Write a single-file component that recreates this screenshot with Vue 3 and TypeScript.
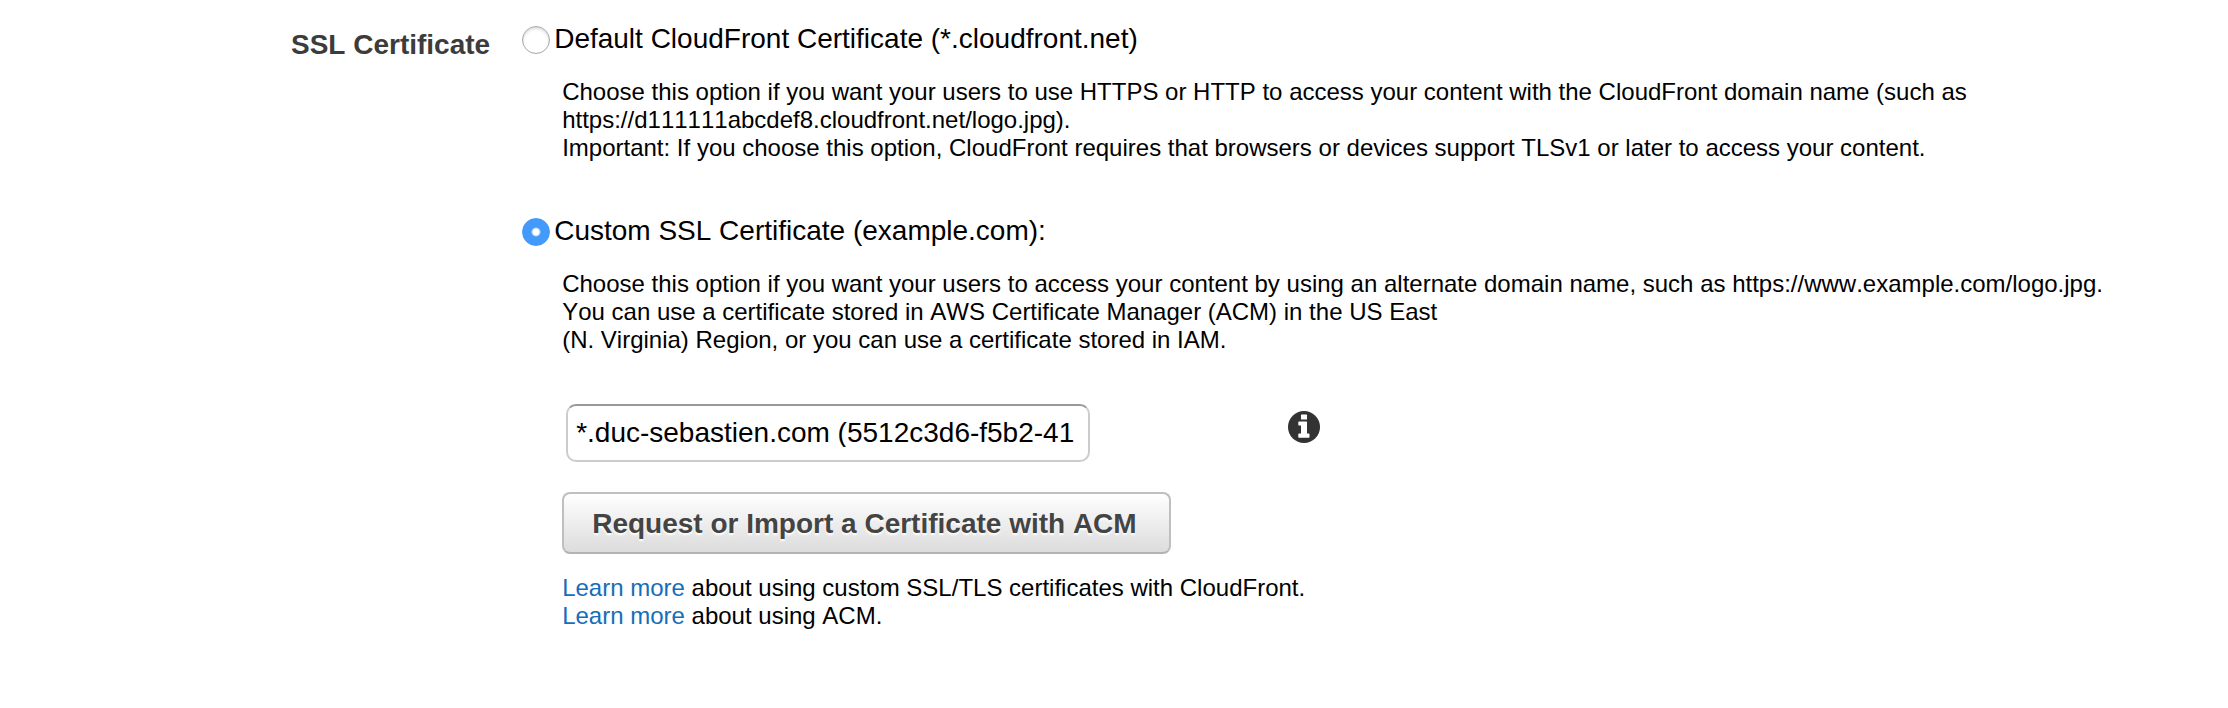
<script setup lang="ts">
import { ref } from 'vue'

type CertificateSource = 'default' | 'custom'

const source = ref<CertificateSource>('custom')
const certificates: string[] = ['*.duc-sebastien.com (5512c3d6-f5b2-41']
const certificate = ref<string>(certificates[0])
</script>

<template>
  <main class="setting">
    <h2 id="ssl-heading" class="setting-name">SSL Certificate</h2>

    <div class="options" role="radiogroup" aria-labelledby="ssl-heading">
      <section class="option">
        <label class="choice">
          <input v-model="source" class="radio" type="radio" name="certificate-source" value="default" />
          <span>Default CloudFront Certificate (*.cloudfront.net)</span>
        </label>
        <p class="description">
          Choose this option if you want your users to use HTTPS or HTTP to access your content with the CloudFront domain name (such as https://d111111abcdef8.cloudfront.net/logo.jpg).<br />
          Important: If you choose this option, CloudFront requires that browsers or devices support TLSv1 or later to access your content.
        </p>
      </section>

      <section class="option">
        <label class="choice">
          <input v-model="source" class="radio" type="radio" name="certificate-source" value="custom" />
          <span>Custom SSL Certificate (example.com):</span>
        </label>
        <p class="description">
          Choose this option if you want your users to access your content by using an alternate domain name, such as https://www.example.com/logo.jpg.<br />
          You can use a certificate stored in AWS Certificate Manager (ACM) in the US East<br />
          (N. Virginia) Region, or you can use a certificate stored in IAM.
        </p>

        <div class="picker">
          <select v-model="certificate" class="certificate" aria-label="Custom SSL certificate">
            <option v-for="item in certificates" :key="item" :value="item">{{ item }}</option>
          </select>
          <button class="info" type="button" aria-label="Certificate help">
            <svg viewBox="0 0 32 32" width="32" height="32" aria-hidden="true">
              <circle cx="16" cy="16" r="16" fill="#333" />
              <path
                d="M13.5 3.5h5q.5 0 .5.5v4q0 .5-.5.5h-5q-.5 0-.5-.5V4q0-.5.5-.5zM11 10.500h7.500q.5 0 .5.5v11.500h1.800q.7 0 .7.7v2.800q0 .7-.7.7h-9.800q-.7 0-.7-.7v-2.800q0-.7.7-.7h2v-8h-2q-.7 0-.7-.7v-2.600q0-.7.7-.7z"
                fill="#fff"
              />
            </svg>
          </button>
        </div>

        <button class="request" type="button">Request or Import a Certificate with ACM</button>

        <p class="links">
          <a href="#ssl-tls">Learn more</a> about using custom SSL/TLS certificates with CloudFront.<br />
          <a href="#acm">Learn more</a> about using ACM.
        </p>
      </section>
    </div>
  </main>
</template>

<style>
body {
  background: #fff;
}
</style>

<style scoped>
.setting {
  display: grid;
  grid-template-columns: 22% minmax(0, 1fr);
  column-gap: 32px;
  padding: 22px 0 78px;
  font-family: "Liberation Sans", Arial, sans-serif;
  font-size: 24px;
  line-height: 28px;
  font-kerning: none;
  color: #000;
}

.setting-name {
  margin: 6px 0 0;
  font-size: 28px;
  line-height: 34px;
  font-weight: 700;
  text-align: right;
  color: #3c3c3c;
}

.options {
  display: flex;
  flex-direction: column;
  gap: 52px;
}

.option {
  display: flex;
  flex-direction: column;
  align-items: flex-start;
}

.choice {
  display: flex;
  align-items: flex-start;
  gap: 4px;
  font-size: 28px;
  line-height: 34px;
}

.radio {
  appearance: none;
  flex: none;
  box-sizing: border-box;
  width: 28px;
  height: 28px;
  margin: 4px 0 0;
  border: 1px solid #a6a6a6;
  border-radius: 50%;
  background: #fff;
  box-shadow: inset 0 2px 3px #dedede;
}

.radio:checked {
  border-color: #4299f7;
  background: radial-gradient(circle, #fff 0 3px, #429bfa 5px);
  box-shadow: none;
}

.description,
.links {
  padding: 0 64px 0 40px;
}

.description {
  margin: 22px 0 0;
}

.picker {
  display: flex;
  align-items: flex-start;
  gap: 198px;
  margin: 50px 0 0 44px;
}

.certificate {
  appearance: none;
  box-sizing: border-box;
  width: 524px;
  height: 58px;
  padding: 0 8px;
  border: 2px solid #ccc;
  border-top-color: #999;
  border-radius: 10px;
  background: #fff;
  font: inherit;
  font-size: 28px;
  font-kerning: none;
  color: #000;
}

.info {
  display: flex;
  margin: 7px 0 0;
  padding: 0;
  border: 0;
  background: none;
}

.request {
  margin: 30px 0 0 40px;
  padding: 14px 32px 12px 28px;
  border: 2px solid #bfbfbf;
  border-bottom-color: #b3b3b3;
  border-radius: 8px;
  background: linear-gradient(#fff, #dcdcdc);
  font: inherit;
  font-size: 28px;
  line-height: 32px;
  font-weight: 700;
  font-kerning: none;
  color: #444;
  text-shadow: 0 2px 2px #fff;
}

.links {
  margin: 20px 0 0;
}

.links a {
  color: #146eb9;
  text-decoration: none;
}
</style>
